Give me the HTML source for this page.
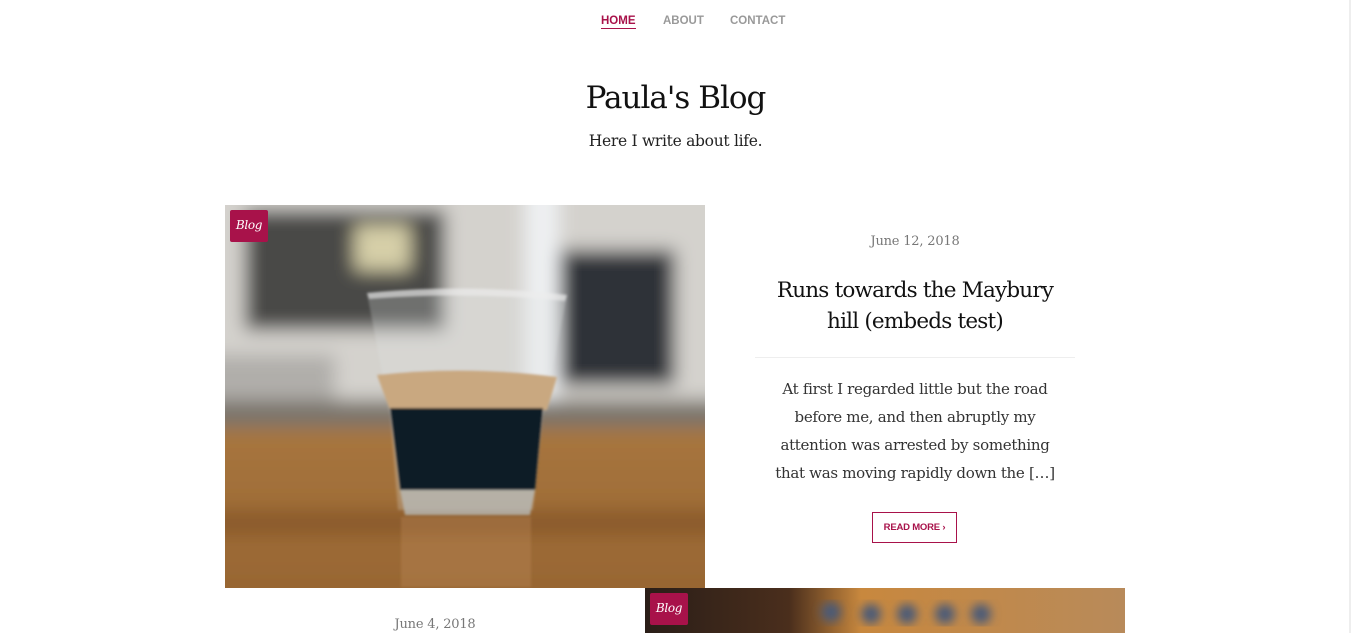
<!DOCTYPE html>
<html><head><meta charset="utf-8"><style>
html,body{margin:0;padding:0;background:#fff;width:1351px;height:633px;overflow:hidden;position:relative}
.nav{position:absolute;top:15px;left:0;width:1351px;font-family:"Liberation Sans",sans-serif;font-weight:bold;font-size:11.5px;color:#999}
.nav span{position:absolute;top:0}
h1{position:absolute;top:80px;left:0;width:1351px;margin:0;text-align:center;font-family:"DejaVu Serif","Liberation Serif",serif;font-weight:normal;font-size:31px;color:#111;letter-spacing:-1px}
.tag{position:absolute;top:132px;left:0;width:1351px;text-align:center;font-family:"DejaVu Serif",serif;font-size:15.5px;color:#222;letter-spacing:-0.3px}
.badge{position:absolute;background:#a8124a;color:#fff;font-family:"DejaVu Serif",serif;font-style:italic;font-size:12px;border-radius:2px;width:38px;height:32px;line-height:31px;text-align:center;letter-spacing:-0.3px}
.date{position:absolute;font-family:"DejaVu Serif",serif;font-size:13px;color:#777;text-align:center;letter-spacing:-0.2px}
.title{position:absolute;left:715px;width:400px;top:275px;text-align:center;font-family:"DejaVu Serif",serif;font-size:21.5px;line-height:31px;color:#111;letter-spacing:-0.8px;white-space:nowrap}
.ex{position:absolute;left:715px;width:400px;top:375px;text-align:center;font-family:"DejaVu Serif",serif;font-size:15px;line-height:28px;color:#333;letter-spacing:-0.3px;white-space:nowrap}
.btn{position:absolute;left:872px;top:512px;width:83px;height:29px;border:1px solid #a8124a;color:#a8124a;font-family:"Liberation Sans",sans-serif;font-size:9.5px;font-weight:bold;text-align:center;line-height:29px;letter-spacing:-0.2px}
</style></head><body>
<div class="nav"><span style="left:601px;color:#a8124a;border-bottom:1px solid #a8124a;padding-bottom:1px">HOME</span><span style="left:663px">ABOUT</span><span style="left:730px">CONTACT</span></div>
<h1>Paula's Blog</h1>
<div class="tag">Here I write about life.</div>

<svg style="position:absolute;left:225px;top:205px" width="480" height="383" viewBox="0 0 480 383">
<defs>
<filter id="b" x="-20%" y="-20%" width="140%" height="140%"><feGaussianBlur stdDeviation="9"/></filter>
<filter id="s" x="-10%" y="-10%" width="120%" height="120%"><feGaussianBlur stdDeviation="1.2"/></filter>
<linearGradient id="w" x1="0" y1="0" x2="0" y2="1"><stop offset="0" stop-color="#a8763e"/><stop offset="1" stop-color="#946230"/></linearGradient>
<clipPath id="c"><rect width="480" height="383"/></clipPath>
</defs>
<g clip-path="url(#c)">
<rect width="480" height="383" fill="#cfcdc8"/>
<g filter="url(#b)">
<rect x="-40" y="-40" width="560" height="270" fill="#d4d2cd"/>
<rect x="20" y="5" width="200" height="120" fill="#4a4a46"/>
<rect x="130" y="20" width="55" height="45" fill="#d6cfa8"/>
<rect x="335" y="45" width="115" height="135" fill="#2e3237"/>
<rect x="300" y="-40" width="34" height="270" fill="#eef0f2"/>
<rect x="-40" y="150" width="150" height="60" fill="#b0aeaa"/>
<rect x="-40" y="195" width="560" height="30" fill="#7a756c"/>
<rect x="-40" y="222" width="560" height="200" fill="url(#w)"/>
<rect x="-40" y="305" width="560" height="25" fill="#8a5a2c"/>
</g>
<g filter="url(#s)">
<path d="M142 88 Q240 78 342 90 L318 210 L308 305 L173 305 L165 210 Z" fill="#e0e2e2" opacity="0.25"/>
<path d="M142 88 Q240 78 342 90 L340 96 Q240 86 144 94 Z" fill="#eee" opacity="0.6"/>
<path d="M152 170 Q240 160 332 172 L322 205 L165 205 Z" fill="#c9a880"/>
<path d="M165 203 L318 203 L310 285 L175 285 Z" fill="#0d1a26"/>
<path d="M175 285 L310 285 L305 310 L180 310 Z" fill="#b8bab6" opacity="0.8"/>
<rect x="176" y="312" width="130" height="70" fill="#c09060" opacity="0.3"/>
</g>
</g>
</svg>
<div class="badge" style="left:230px;top:210px">Blog</div>

<div class="date" style="left:755px;width:320px;top:234px">June 12, 2018</div>
<div class="title">Runs towards the Maybury<br>hill (embeds test)</div>
<div style="position:absolute;left:755px;top:357px;width:320px;height:1px;background:#eee"></div>
<div class="ex">At first I regarded little but the road<br>before me, and then abruptly my<br>attention was arrested by something<br>that was moving rapidly down the […]</div>
<div class="btn">READ MORE ›</div>

<svg style="position:absolute;left:645px;top:588px" width="480" height="45">
<defs><filter id="b2"><feGaussianBlur stdDeviation="5"/></filter>
<linearGradient id="g2" x1="0" x2="1"><stop offset="0" stop-color="#2a1e18"/><stop offset="0.3" stop-color="#4a2e1c"/><stop offset="0.45" stop-color="#c8883e"/><stop offset="1" stop-color="#b88a5a"/></linearGradient></defs>
<rect width="480" height="45" fill="url(#g2)"/>
<g filter="url(#b2)" fill="#4a5a78"><circle cx="186" cy="24" r="10"/><circle cx="226" cy="26" r="10"/><circle cx="262" cy="26" r="10"/><circle cx="300" cy="26" r="10"/><circle cx="336" cy="26" r="10"/></g>
</svg>
<div class="badge" style="left:650px;top:593px">Blog</div>
<div class="date" style="left:225px;width:420px;top:617px">June 4, 2018</div>
<div style="position:absolute;left:1349px;top:0;width:2px;height:633px;background:#eee"></div>
</body></html>
